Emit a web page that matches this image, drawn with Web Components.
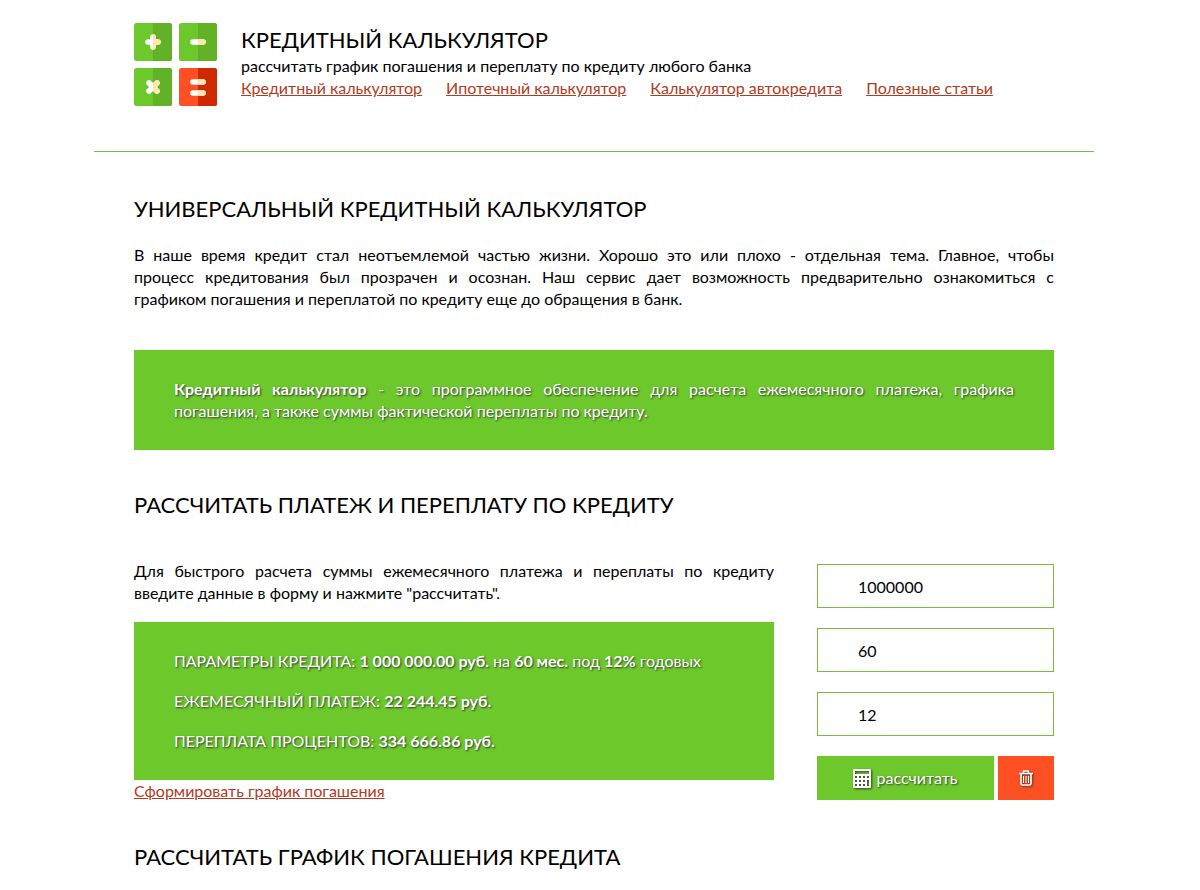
<!DOCTYPE html>
<html lang="ru">
<head>
<meta charset="utf-8">
<meta name="viewport" content="width=device-width, initial-scale=1">
<title>Кредитный калькулятор</title>
<style>
  :root {
    --green: #6dc92b;
    --green-line: #76bd40;
    --red: #ff5023;
    --link: #b23a1e;
    --shadow: 1px 1px 2px #333;
  }
  body { margin: 0; padding-right: 12px; background: #fff; color: #000;
         font: 16px/22px Lato, "Open Sans", sans-serif; }
  .keep { white-space: nowrap; }
</style>
</head>
<body>
<credit-page>
  <site-header slot="header" data-title="Кредитный калькулятор">
    рассчитать график погашения и переплату по кредиту любого банка
    <nav-link slot="nav" data-href="#credit">Кредитный калькулятор</nav-link>
    <nav-link slot="nav" data-href="#mortgage">Ипотечный калькулятор</nav-link>
    <nav-link slot="nav" data-href="#auto">Калькулятор автокредита</nav-link>
    <nav-link slot="nav" data-href="#articles">Полезные статьи</nav-link>
  </site-header>

  <page-section data-title="Универсальный кредитный калькулятор">
    <text-block>В наше время кредит стал неотъемлемой частью жизни. Хорошо это или плохо - отдельная тема. Главное, чтобы <span class="keep">процесс кредитования</span> был прозрачен и осознан. Наш сервис дает возможность предварительно ознакомиться с <span class="keep">графиком погашения</span> и переплатой по кредиту еще до обращения в банк.</text-block>
    <green-box><b>Кредитный калькулятор</b> - это программное обеспечение для расчета ежемесячного платежа, графика погашения, а также суммы фактической переплаты по кредиту.</green-box>
  </page-section>

  <page-section data-title="Рассчитать платеж и переплату по кредиту">
    <credit-calculator data-sum="1000000" data-months="60" data-rate="12"></credit-calculator>
  </page-section>

  <page-section data-title="Рассчитать график погашения кредита"></page-section>
</credit-page>

<template id="credit-page">
  <style>
    :host { display: block; max-width: 1000px; margin: 0 auto; }
    main { display: flex; flex-direction: column; gap: 40px; padding: 42px 40px 18px; }
  </style>
  <slot name="header"></slot>
  <main><slot></slot></main>
</template>

<template id="site-header">
  <style>
    :host { display: block; border-bottom: 1px solid var(--green-line); }
    header { display: flex; gap: 24px; padding: 23px 40px 45px; }
    svg { flex: none; display: block; }
    h1 { margin: 0; padding-top: 2px; font-size: 22px; line-height: 30px; font-weight: 400; text-transform: uppercase; }
    p { margin: 0; }
    nav { display: flex; flex-wrap: wrap; column-gap: 24px; }
  </style>
  <header>
    <svg width="83" height="83" viewBox="0 0 83 83" aria-hidden="true">
      <defs>
        <clipPath id="tile"><rect width="38" height="38" rx="2.5"/></clipPath>
        <clipPath id="right"><rect x="19" width="19" height="38"/></clipPath>
      </defs>
      <g clip-path="url(#tile)">
        <path fill="#6dc92b" d="M0 0h38v38H0z"/><path fill="#61b227" d="M19 0h19v38H19z"/>
        <path stroke="#fff" stroke-width="5.6" stroke-linecap="round" d="M14 19h10M19 14v10"/>
        <g clip-path="url(#right)"><path stroke="#ffe6b0" stroke-width="5.6" stroke-linecap="round" d="M14 19h10M19 14v10"/></g>
      </g>
      <g transform="translate(45 0)"><g clip-path="url(#tile)">
        <path fill="#6dc92b" d="M0 0h38v38H0z"/><path fill="#61b227" d="M19 0h19v38H19z"/>
        <path stroke="#fff" stroke-width="5.6" stroke-linecap="round" d="M14 19h10"/>
        <g clip-path="url(#right)"><path stroke="#ffe6b0" stroke-width="5.6" stroke-linecap="round" d="M14 19h10"/></g>
      </g></g>
      <g transform="translate(0 45)"><g clip-path="url(#tile)">
        <path fill="#6dc92b" d="M0 0h38v38H0z"/><path fill="#61b227" d="M19 0h19v38H19z"/>
        <path stroke="#fff" stroke-width="5.6" stroke-linecap="round" d="M15 15l8 8M23 15l-8 8"/>
        <g clip-path="url(#right)"><path stroke="#ffe6b0" stroke-width="5.6" stroke-linecap="round" d="M15 15l8 8M23 15l-8 8"/></g>
      </g></g>
      <g transform="translate(45 45)"><g clip-path="url(#tile)">
        <path fill="#ff5023" d="M0 0h38v38H0z"/><path fill="#cf2900" d="M19 0h19v38H19z"/>
        <path stroke="#fff" stroke-width="5.6" stroke-linecap="round" d="M14 14h10M14 25h10"/>
        <g clip-path="url(#right)"><path stroke="#ffe6b0" stroke-width="5.6" stroke-linecap="round" d="M14 14h10M14 25h10"/></g>
      </g></g>
    </svg>
    <div>
      <h1></h1>
      <p><slot></slot></p>
      <nav><slot name="nav"></slot></nav>
    </div>
  </header>
</template>

<template id="nav-link">
  <style>
    :host { display: block; }
    a { color: var(--link); text-decoration: underline; }
  </style>
  <a><slot></slot></a>
</template>

<template id="page-section">
  <style>
    :host { display: block; }
    h2 { margin: 0 0 20px; font-size: 22px; line-height: 30px; font-weight: 400; text-transform: uppercase; }
    div { display: flex; flex-direction: column; gap: 40px; }
  </style>
  <section>
    <h2></h2>
    <div><slot></slot></div>
  </section>
</template>

<template id="text-block">
  <style>
    :host { display: block; text-align: justify; }
    p { margin: 0; }
  </style>
  <p><slot></slot></p>
</template>

<template id="green-box">
  <style>
    :host { display: block; padding: 28px 40px; background: var(--green); color: #fff;
            text-align: justify; text-shadow: var(--shadow); }
  </style>
  <slot></slot>
</template>

<template id="credit-calculator">
  <style>
    :host { display: flex; justify-content: space-between; gap: 43px; padding-top: 20px; }
    .info { flex: 1; }
    .rows { display: flex; flex-direction: column; gap: 18px; }
    .rows p { margin: 0; text-align: left; }
    green-box { margin-top: 18px; }
    form { flex: 0 0 237px; display: flex; flex-direction: column; gap: 20px; padding-top: 4px; }
    input { box-sizing: border-box; width: 100%; height: 44px; margin: 0; padding: 0 40px; border: 1px solid var(--green-line);
            border-radius: 0; background: #fff; color: #000; font: inherit; outline: 0; }
    .actions { display: flex; gap: 4px; }
    button { display: flex; align-items: center; justify-content: center; gap: 5px; height: 44px; padding: 0; border: 0;
             color: #fff; font: inherit; text-shadow: var(--shadow); cursor: pointer; }
    button svg { filter: drop-shadow(1px 1px 1px #333); }
    .submit { flex: 1; background: var(--green); }
    .reset { flex: 0 0 56px; background: var(--red); }
  </style>
  <div class="info">
    <text-block>Для быстрого расчета суммы ежемесячного платежа и переплаты по кредиту введите данные в форму и нажмите "рассчитать".</text-block>
    <green-box>
      <div class="rows">
        <p>ПАРАМЕТРЫ КРЕДИТА: <b data-out="sum"></b> на <b data-out="months"></b> под <b data-out="rate"></b> годовых</p>
        <p>ЕЖЕМЕСЯЧНЫЙ ПЛАТЕЖ: <b data-out="payment"></b></p>
        <p>ПЕРЕПЛАТА ПРОЦЕНТОВ: <b data-out="over"></b></p>
      </div>
    </green-box>
    <nav-link data-href="#schedule">Сформировать график погашения</nav-link>
  </div>
  <form>
    <input type="text" name="sum" inputmode="numeric" aria-label="Сумма кредита">
    <input type="text" name="months" inputmode="numeric" aria-label="Срок, месяцев">
    <input type="text" name="rate" inputmode="decimal" aria-label="Процентная ставка">
    <div class="actions">
      <button class="submit" type="submit">
        <svg width="18" height="19" viewBox="0 0 18 19" aria-hidden="true">
          <path fill="#fff" fill-rule="evenodd" d="M1 0h16a1 1 0 0 1 1 1v17a1 1 0 0 1-1 1H1a1 1 0 0 1-1-1V1a1 1 0 0 1 1-1zM2 2v3h14V2zM2 7v2h2V7zm4 0v2h2V7zm4 0v2h2V7zm4 0v2h2V7zM2 11v2h2v-2zm4 0v2h2v-2zm4 0v2h2v-2zm4 0v6h2v-6zM2 15v2h2v-2zm4 0v2h2v-2zm4 0v2h2v-2z"/>
        </svg>
        рассчитать
      </button>
      <button class="reset" type="reset" aria-label="Очистить">
        <svg width="16" height="16" viewBox="0 0 16 16" fill="none" stroke="#fff" aria-hidden="true">
          <path stroke-width="1.6" d="M1 3.5h14M3 4v9.5q0 1.5 1.5 1.5h7q1.5 0 1.5-1.5V4"/>
          <path stroke-width="1.4" d="M5.5 3V1h5v2"/>
          <path stroke-width="1" d="M5.5 6v7M8 6v7M10.500 6v7"/>
        </svg>
      </button>
    </div>
  </form>
</template>

<script>
class BaseElement extends HTMLElement {
  constructor() {
    super();
    const tpl = document.getElementById(this.localName);
    this.attachShadow({ mode: 'open' });
    this.shadowRoot.appendChild(tpl.content.cloneNode(true));
  }
  $(sel) { return this.shadowRoot.querySelector(sel); }
}

class CreditPage extends BaseElement {}
class TextBlock extends BaseElement {}
class GreenBox extends BaseElement {}

class SiteHeader extends BaseElement {
  connectedCallback() { this.$('h1').textContent = this.dataset.title || ''; }
}

class PageSection extends BaseElement {
  connectedCallback() { this.$('h2').textContent = this.dataset.title || ''; }
}

class NavLink extends BaseElement {
  connectedCallback() { this.$('a').href = this.dataset.href || '#'; }
}

class CreditCalculator extends BaseElement {
  connectedCallback() {
    const form = this.$('form');
    ['sum', 'months', 'rate'].forEach(name => { form.elements[name].value = this.dataset[name] || ''; });
    form.addEventListener('submit', (e) => { e.preventDefault(); this.calculate(); });
    this.calculate();
  }
  money(n) {
    const [int, frac] = n.toFixed(2).split('.');
    return `${int.replace(/\B(?=(\d{3})+$)/g, ' ')}.${frac} руб.`;
  }
  calculate() {
    const f = this.$('form').elements;
    const sum = Number(f.sum.value);
    const months = Number(f.months.value);
    const rate = Number(f.rate.value);
    if (!(sum > 0 && months > 0 && rate > 0)) return;
    // annuity payment
    const r = rate / 1200;
    const payment = sum * r / (1 - Math.pow(1 + r, -months));
    const out = {
      sum: this.money(sum),
      months: `${months} мес.`,
      rate: `${rate}%`,
      payment: this.money(payment),
      over: this.money(payment * months - sum)
    };
    Object.keys(out).forEach(k => { this.$(`[data-out="${k}"]`).textContent = out[k]; });
  }
}

customElements.define('credit-page', CreditPage);
customElements.define('text-block', TextBlock);
customElements.define('green-box', GreenBox);
customElements.define('site-header', SiteHeader);
customElements.define('page-section', PageSection);
customElements.define('nav-link', NavLink);
customElements.define('credit-calculator', CreditCalculator);
</script>
</body>
</html>
